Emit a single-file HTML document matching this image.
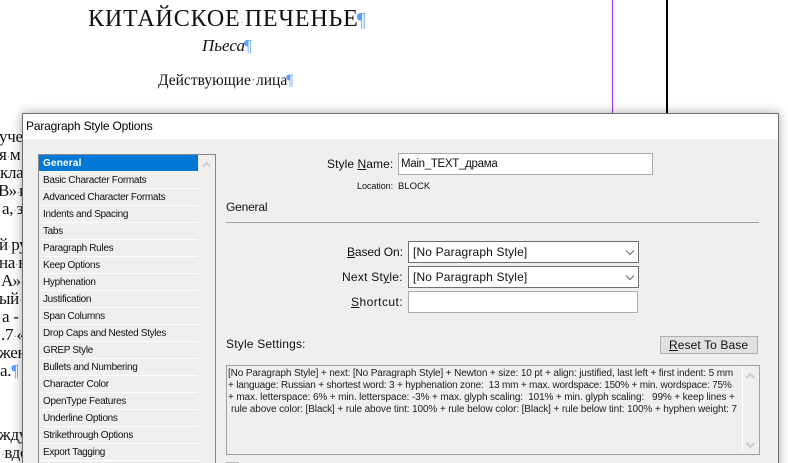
<!DOCTYPE html>
<html><head><meta charset="utf-8">
<style>
html,body{margin:0;padding:0;width:788px;height:463px;overflow:hidden;background:#fff}
body{position:relative;font-family:"Liberation Sans",sans-serif;color:#111}
.a{position:absolute;white-space:pre}
.s{font-family:"Liberation Serif",serif;color:#111}
.p{color:#5b9dff}
.d{color:#5b9dff;font-size:11px}
.bg{font-size:17px;line-height:18px;height:18px;letter-spacing:-.3px}
#d{position:absolute;left:22px;top:113px;width:755px;height:360px;border:1px solid #6e6e6e;background:#efefef;box-shadow:0 0 10px rgba(0,0,0,.35)}
#t{position:absolute;left:0;top:0;width:100%;height:25px;background:#fff}
.u{font-size:12px;line-height:16px;letter-spacing:.08px;color:#111}
.l{font-size:10px;line-height:14px;left:43px;letter-spacing:-.32px;color:#111}
.sep{position:absolute;left:39px;width:159px;height:1px;background:#fff}
.box{position:absolute;background:#fff;box-sizing:border-box}
.set{font-size:10px;line-height:12px;left:228px;color:#222}
</style></head><body>
<div class="a s" style="left:88px;top:4px;font-size:24px;line-height:30px;letter-spacing:.85px">КИТАЙСКОЕ<span class="p" style="font-size:10px">·</span>ПЕЧЕНЬЕ<span class="p" style="font-size:20px;letter-spacing:0;margin-left:-2px">¶</span></div>
<div class="a s" style="left:202px;top:36px;font-size:17px;line-height:20px;font-style:italic">Пьеса<span class="p" style="font-style:normal;margin-left:-1px">¶</span></div>
<div class="a s" style="left:158px;top:71px;font-size:15.5px;line-height:20px">Действующие<span class="p" style="letter-spacing:0">·</span>лица<span class="p" style="margin-left:-1px">¶</span></div>
<div style="position:absolute;left:612px;top:0;width:1px;height:113px;background:#9b30ff"></div>
<div style="position:absolute;left:666px;top:0;width:2px;height:113px;background:#000"></div>

<div class="a s bg" style="left:-1px;top:128px">учет</div>
<div class="a s bg" style="left:-1px;top:146px">я<span class="d">·</span>м</div>
<div class="a s bg" style="left:0;top:164px">кла</div>
<div class="a s bg" style="left:-2px;top:182px;letter-spacing:-.8px">В»<span class="d">·</span>к</div>
<div class="a s bg" style="left:2px;top:200px">а,<span class="d">·</span>з</div>
<div class="a s bg" style="left:-1px;top:236px">й<span class="d">·</span>ру</div>
<div class="a s bg" style="left:-1px;top:254px">на<span class="d">·</span>в</div>
<div class="a s bg" style="left:1px;top:272px;letter-spacing:-.8px">А»<span class="d">·</span>к</div>
<div class="a s bg" style="left:-1px;top:290px">ый<span class="d">·</span></div>
<div class="a s bg" style="left:2px;top:308px">а - Д</div>
<div class="a s bg" style="left:1px;top:326px">.7<span class="d">·</span>«</div>
<div class="a s bg" style="left:-1px;top:344px">жен</div>
<div class="a s bg" style="left:0;top:362px">а.<span class="p">¶</span></div>
<div class="a s bg" style="left:-1px;top:426px">жду</div>
<div class="a s bg" style="left:1px;top:444px"><span class="d">·</span>вдо</div>

<div id="d"><div id="t"></div></div>
<div class="a u" style="left:26px;top:118px;letter-spacing:-.18px;color:#000">Paragraph Style Options</div>

<div style="position:absolute;left:38px;top:154px;width:178px;height:320px;box-sizing:border-box;border:1px solid #828790;background:#efefef"></div>
<div style="position:absolute;left:39px;top:155px;width:159px;height:16px;background:#0078d7"></div>
<svg style="position:absolute;left:198px;top:155px" width="17" height="17"><path d="M5 11.500l3.500-3.500l3.500 3.500" fill="none" stroke="#ccc" stroke-width="2"/></svg>
<div class="sep" style="top:171px"></div><div class="sep" style="top:188px"></div><div class="sep" style="top:205px"></div><div class="sep" style="top:222px"></div><div class="sep" style="top:239px"></div><div class="sep" style="top:256px"></div><div class="sep" style="top:273px"></div><div class="sep" style="top:290px"></div><div class="sep" style="top:307px"></div><div class="sep" style="top:324px"></div><div class="sep" style="top:341px"></div><div class="sep" style="top:358px"></div><div class="sep" style="top:375px"></div><div class="sep" style="top:392px"></div><div class="sep" style="top:409px"></div><div class="sep" style="top:426px"></div><div class="sep" style="top:443px"></div><div class="sep" style="top:460px"></div>
<div class="a l" style="top:157px;color:#fff;font-weight:bold;letter-spacing:.2px">General</div>
<div class="a l" style="top:174px">Basic Character Formats</div>
<div class="a l" style="top:191px">Advanced Character Formats</div>
<div class="a l" style="top:208px">Indents and Spacing</div>
<div class="a l" style="top:225px">Tabs</div>
<div class="a l" style="top:242px">Paragraph Rules</div>
<div class="a l" style="top:259px">Keep Options</div>
<div class="a l" style="top:276px">Hyphenation</div>
<div class="a l" style="top:293px">Justification</div>
<div class="a l" style="top:310px">Span Columns</div>
<div class="a l" style="top:327px">Drop Caps and Nested Styles</div>
<div class="a l" style="top:344px">GREP Style</div>
<div class="a l" style="top:361px">Bullets and Numbering</div>
<div class="a l" style="top:378px">Character Color</div>
<div class="a l" style="top:395px">OpenType Features</div>
<div class="a l" style="top:412px">Underline Options</div>
<div class="a l" style="top:429px">Strikethrough Options</div>
<div class="a l" style="top:446px">Export Tagging</div>

<div class="a u" style="left:327px;top:156px">Style <u>N</u>ame:</div>
<div class="box" style="left:398px;top:153px;width:255px;height:22px;border:1px solid #a9a9b0"></div>
<div class="a u" style="left:401px;top:156px;font-size:11.5px;letter-spacing:-.3px">Main_TEXT_драма</div>
<div class="a" style="left:357px;top:180px;font-size:9px;line-height:13px;letter-spacing:-.05px">Location:</div>
<div class="a" style="left:398px;top:180px;font-size:9.500px;line-height:13px">BLOCK</div>
<div class="a u" style="left:226px;top:199px;letter-spacing:-.2px">General</div>
<div style="position:absolute;left:226px;top:222px;width:533px;height:1px;background:#a0a0a0"></div>

<div class="a u" style="left:347px;top:244px;letter-spacing:-.1px"><u>B</u>ased On:</div>
<div class="box" style="left:408px;top:241px;width:231px;height:22px;border:1px solid #6f6f6f"></div>
<div class="a u" style="left:413px;top:244px;letter-spacing:.15px">[No Paragraph Style]</div>
<svg style="position:absolute;left:625px;top:249px" width="12" height="8"><path d="M1 1.500l4 4l4-4" fill="none" stroke="#666" stroke-width="1"/></svg>
<div class="a u" style="left:342px;top:269px;letter-spacing:.25px">Next St<u>y</u>le:</div>
<div class="box" style="left:408px;top:266px;width:231px;height:22px;border:1px solid #6f6f6f"></div>
<div class="a u" style="left:413px;top:269px;letter-spacing:.15px">[No Paragraph Style]</div>
<svg style="position:absolute;left:625px;top:274px" width="12" height="8"><path d="M1 1.500l4 4l4-4" fill="none" stroke="#666" stroke-width="1"/></svg>
<div class="a u" style="left:351px;top:294px;letter-spacing:.45px"><u>S</u>hortcut:</div>
<div class="box" style="left:408px;top:291px;width:230px;height:22px;border:1px solid #ababab"></div>

<div class="a u" style="left:226px;top:336px;letter-spacing:.2px">Style Settings:</div>
<div class="box" style="left:660px;top:336px;width:98px;height:18px;background:#e1e1e1;border:1px solid #adadad"></div>
<div class="a u" style="left:669px;top:337px;letter-spacing:.1px"><u>R</u>eset To Base</div>

<div class="box" style="left:226px;top:365px;width:534px;height:90px;background:#efefef;border:1px solid #a0a0a0"></div>
<div style="position:absolute;left:742px;top:366px;width:1px;height:86px;background:#fff"></div>
<svg style="position:absolute;left:745px;top:371px" width="12" height="80"><path d="M1.500 7l4-4l4 4M1.500 72l4 4l4-4" fill="none" stroke="#ccc" stroke-width="2"/></svg>
<div class="a set" style="top:368px;letter-spacing:-.13px">[No Paragraph Style] + next: [No Paragraph Style] + Newton + size: 10 pt + align: justified, last left + first indent: 5 mm</div>
<div class="a set" style="top:380px;letter-spacing:-.2px">+ language: Russian + shortest word: 3 + hyphenation zone:  13 mm + max. wordspace: 150% + min. wordspace: 75%</div>
<div class="a set" style="top:392px;letter-spacing:-.13px">+ max. letterspace: 6% + min. letterspace: -3% + max. glyph scaling:  101% + min. glyph scaling:   99% + keep lines +</div>
<div class="a set" style="top:404px;left:231px;letter-spacing:-.12px">rule above color: [Black] + rule above tint: 100% + rule below color: [Black] + rule below tint: 100% + hyphen weight: 7</div>
<div style="position:absolute;left:226px;top:462px;width:13px;height:1px;background:#bbb"></div>
</body></html>
